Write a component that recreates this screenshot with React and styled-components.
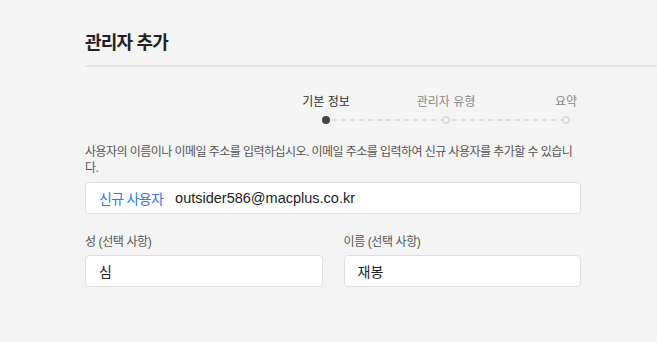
import React from "react";
import styled, { createGlobalStyle } from "styled-components";

const GlobalStyle = createGlobalStyle`
  html, body {
    margin: 0;
    padding: 0;
    background: #f4f4f4;
  }
  body {
    font-family: "Liberation Sans", "Noto Sans CJK KR", sans-serif;
    color: #333;
  }
`;

const Page = styled.div`
  width: 657px;
  height: 342px;
  overflow: hidden;
  padding-left: 85px;
  box-sizing: border-box;
`;

const Header = styled.div`
  height: 67px;
  box-sizing: border-box;
  border-bottom: 2px solid #e6e6e6;
  display: flex;
  align-items: flex-end;
  padding-bottom: 10px;
`;

const Title = styled.h1`
  margin: 0;
  font-size: 18px;
  line-height: 24px;
  font-weight: 700;
  color: #222;
  letter-spacing: -0.8px;
`;

const Form = styled.div`
  width: 496px;
`;

const Stepper = styled.div`
  display: flex;
  padding-left: 181px;
  margin-top: 27px;
`;

const Step = styled.div`
  position: relative;
  flex: none;
  width: 120px;
  display: flex;
  flex-direction: column;
  align-items: center;
`;

const StepLabel = styled.div`
  font-size: 12px;
  line-height: 16px;
  color: ${(p) => (p.$active ? "#333" : "#888")};
  white-space: nowrap;
`;

const Dot = styled.div`
  margin-top: 6px;
  width: 8px;
  height: 8px;
  border-radius: 50%;
  box-sizing: border-box;
  background: ${(p) => (p.$active ? "#444" : "#f7f7f7")};
  border: ${(p) => (p.$active ? "none" : "2px solid #dcdcdc")};
  position: relative;
  z-index: 1;
`;

const Dashes = styled.div`
  position: absolute;
  left: 66px;
  width: 110px;
  top: 25px;
  height: 2px;
  background: repeating-linear-gradient(
    to right,
    #dedede 0,
    #dedede 5px,
    transparent 5px,
    transparent 9px
  );
`;

const Description = styled.p`
  margin: 20px 0 0;
  font-size: 12px;
  line-height: 16px;
  color: #555;
  letter-spacing: -0.55px;
`;

const Field = styled.div`
  height: 32px;
  box-sizing: border-box;
  background: #fff;
  border: 1px solid #e0e0e0;
  border-radius: 4px;
  display: flex;
  align-items: center;
  padding: 0 13px;
  font-size: 14px;
  color: #222;
`;

const EmailField = styled(Field)`
  margin-top: 6px;
  font-size: 14.5px;
`;

const Tag = styled.span`
  color: #2f7be8;
  font-size: 14px;
  letter-spacing: -0.7px;
  margin-right: 12px;
`;

const Row = styled.div`
  display: grid;
  grid-template-columns: 1fr 1fr;
  column-gap: 21px;
  margin-top: 20px;
`;

const Column = styled.div`
  display: flex;
  flex-direction: column;
`;

const FieldLabel = styled.label`
  font-size: 12px;
  line-height: 16px;
  color: #555;
  letter-spacing: -0.4px;
  margin-bottom: 5px;
`;

const steps = ["기본 정보", "관리자 유형", "요약"];

export default function App() {
  return (
    <Page>
      <GlobalStyle />
      <Header>
        <Title>관리자 추가</Title>
      </Header>
      <Form>
        <Stepper>
          {steps.map((s, i) => (
            <Step key={s}>
              <StepLabel $active={i === 0}>{s}</StepLabel>
              <Dot $active={i === 0} />
              {i < steps.length - 1 && <Dashes />}
            </Step>
          ))}
        </Stepper>
        <Description>
          사용자의 이름이나 이메일 주소를 입력하십시오. 이메일 주소를 입력하여
          신규 사용자를 추가할 수 있습니다.
        </Description>
        <EmailField>
          <Tag>신규 사용자</Tag>
          outsider586@macplus.co.kr
        </EmailField>
        <Row>
          <Column>
            <FieldLabel>성 (선택 사항)</FieldLabel>
            <Field>심</Field>
          </Column>
          <Column>
            <FieldLabel>이름 (선택 사항)</FieldLabel>
            <Field>재봉</Field>
          </Column>
        </Row>
      </Form>
    </Page>
  );
}
